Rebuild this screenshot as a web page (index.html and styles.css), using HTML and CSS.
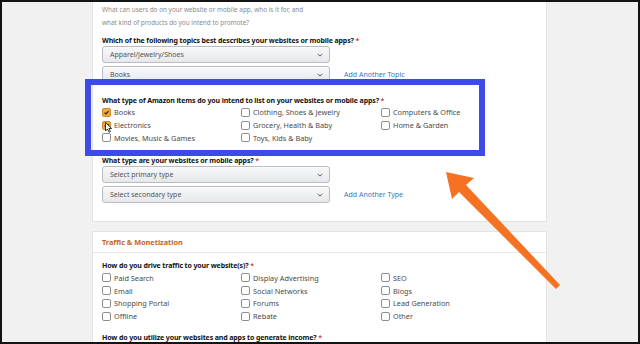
FILE: index.html
```html
<!DOCTYPE html>
<html>
<head>
<meta charset="utf-8">
<link rel="stylesheet" href="styles.css">
</head>
<body>
<div class="frame">
  <section class="card card-top">
    <p class="hint">What can users do on your website or mobile app, who is it for, and<br>what kind of products do you intend to promote?</p>

    <p class="question q-topics">Which of the following topics best describes your websites or mobile apps? <span class="req">*</span></p>
    <div class="select-row">
      <div class="select">Apparel/Jewelry/Shoes<svg class="chev" viewBox="0 0 8 5"><path d="M1 1l3 3 3-3" fill="none" stroke="#555" stroke-width="1.3"/></svg></div>
    </div>
    <div class="select-row">
      <div class="select">Books<svg class="chev" viewBox="0 0 8 5"><path d="M1 1l3 3 3-3" fill="none" stroke="#555" stroke-width="1.3"/></svg></div>
      <a class="link">Add Another Topic</a>
    </div>

    <p class="question q-items">What type of Amazon items do you intend to list on your websites or mobile apps? <span class="req">*</span></p>
    <div class="checks">
      <label class="check"><span class="box on"><svg viewBox="0 0 9 9"><path d="M2 4.6l1.8 1.8L7.2 2.6" fill="none" stroke="#222" stroke-width="1.4"/></svg></span>Books</label>
      <label class="check"><span class="box"></span>Clothing, Shoes &amp; Jewelry</label>
      <label class="check"><span class="box"></span>Computers &amp; Office</label>
      <label class="check"><span class="box on"><svg viewBox="0 0 9 9"><path d="M2 4.6l1.8 1.8L7.2 2.6" fill="none" stroke="#222" stroke-width="1.4"/></svg></span>Electronics</label>
      <label class="check"><span class="box"></span>Grocery, Health &amp; Baby</label>
      <label class="check"><span class="box"></span>Home &amp; Garden</label>
      <label class="check"><span class="box"></span>Movies, Music &amp; Games</label>
      <label class="check"><span class="box"></span>Toys, Kids &amp; Baby</label>
    </div>

    <p class="question q-type">What type are your websites or mobile apps? <span class="req">*</span></p>
    <div class="select-row">
      <div class="select">Select primary type<svg class="chev" viewBox="0 0 8 5"><path d="M1 1l3 3 3-3" fill="none" stroke="#555" stroke-width="1.3"/></svg></div>
    </div>
    <div class="select-row">
      <div class="select">Select secondary type<svg class="chev" viewBox="0 0 8 5"><path d="M1 1l3 3 3-3" fill="none" stroke="#555" stroke-width="1.3"/></svg></div>
      <a class="link">Add Another Type</a>
    </div>
  </section>

  <section class="card card-traffic">
    <header class="card-head">Traffic &amp; Monetization</header>
    <div class="card-body">
      <p class="question q-traffic">How do you drive traffic to your website(s)? <span class="req">*</span></p>
      <div class="checks checks-traffic">
        <label class="check"><span class="box"></span>Paid Search</label>
        <label class="check"><span class="box"></span>Display Advertising</label>
        <label class="check"><span class="box"></span>SEO</label>
        <label class="check"><span class="box"></span>Email</label>
        <label class="check"><span class="box"></span>Social Networks</label>
        <label class="check"><span class="box"></span>Blogs</label>
        <label class="check"><span class="box"></span>Shopping Portal</label>
        <label class="check"><span class="box"></span>Forums</label>
        <label class="check"><span class="box"></span>Lead Generation</label>
        <label class="check"><span class="box"></span>Offline</label>
        <label class="check"><span class="box"></span>Rebate</label>
        <label class="check"><span class="box"></span>Other</label>
      </div>
      <p class="question q-income">How do you utilize your websites and apps to generate income? <span class="req">*</span></p>
    </div>
  </section>
</div>

<div class="highlight"></div>

<svg class="cursor" viewBox="0 0 7 11"><path d="M0.5 0.5v8.5l2-2 1.5 3.2 1.4-.6-1.5-3.1h2.8z" fill="#fff" stroke="#111" stroke-width="0.8"/></svg>

<svg class="arrow" viewBox="0 0 640 344"><polygon points="446,172 474,178 466,185 560,285 556,289 459,192 452,199" fill="#f57223"/></svg>
</body>
</html>
```

FILE: styles.css
```css
html, body {
  margin: 0;
  padding: 0;
}
body {
  position: relative;
  width: 640px;
  height: 344px;
  overflow: hidden;
  background: #111;
  font-family: "Noto Sans", "Open Sans", sans-serif;
}
.frame {
  width: 640px;
  height: 344px;
  box-sizing: border-box;
  border: 2px solid #141414;
  background: #f1f1f1;
  overflow: hidden;
}
.card {
  margin-left: 90px;
  width: 455px;
  box-sizing: border-box;
  background: #fff;
  border: 1px solid #e3e3e3;
}
.card-top {
  border-top: none;
  padding: 1px 8px 15px 9px;
}
p {
  margin: 0;
}
.hint {
  font-size: 6.4px;
  line-height: 13px;
  color: #8a8a8a;
}
.question {
  font-size: 7px;
  font-weight: 700;
  line-height: 10px;
  color: #111;
  letter-spacing: -0.12px;
}
.req {
  color: #c40000;
  font-weight: 400;
}
.q-topics { margin-top: 7px; }
.q-items { margin-top: 13px; }
.q-type { margin-top: 12px; }
.select-row {
  display: flex;
  align-items: center;
  gap: 14px;
  margin-bottom: 3px;
}
.select {
  width: 228px;
  height: 17px;
  box-sizing: border-box;
  border: 1px solid #b9bbbf;
  border-radius: 3px;
  background: linear-gradient(#f7f8fa, #e6e8eb);
  box-shadow: 0 1px 0 rgba(255,255,255,.6) inset;
  padding: 0 6px 0 7px;
  display: flex;
  align-items: center;
  justify-content: space-between;
  font-size: 7px;
  color: #555;
}
.chev {
  width: 6px;
  height: 4px;
}
.link {
  font-size: 7px;
  color: #3b74b8;
}
.checks {
  display: grid;
  grid-template-columns: 139px 140px 1fr;
  grid-auto-rows: 12.8px;
}
.check {
  display: flex;
  align-items: center;
  gap: 3px;
  font-size: 7.3px;
  color: #4a4a4a;
  white-space: nowrap;
}
.box {
  width: 9px;
  height: 9px;
  box-sizing: border-box;
  border: 1px solid #8c8f94;
  border-radius: 2px;
  background: #fff;
  flex: none;
  display: flex;
}
.box.on {
  background: #f2a83b;
  border-color: #c88a2a;
}
.box svg {
  width: 100%;
  height: 100%;
}
.card-traffic {
  margin-top: 9px;
}
.card-head {
  height: 20px;
  line-height: 20px;
  padding: 0 9px;
  border-bottom: 1px solid #e8e8e8;
  font-size: 7.3px;
  font-weight: 700;
  color: #c4661f;
}
.card-body {
  padding: 8px 8px 10px 9px;
}
.q-income { margin-top: 10px; }
.highlight {
  position: absolute;
  left: 85px;
  top: 79px;
  width: 400px;
  height: 77px;
  box-sizing: border-box;
  border: 6px solid #3b4ae8;
}
.cursor {
  position: absolute;
  left: 105px;
  top: 122px;
  width: 7px;
  height: 11px;
}
.arrow {
  position: absolute;
  left: 0;
  top: 0;
  width: 640px;
  height: 344px;
}
```
